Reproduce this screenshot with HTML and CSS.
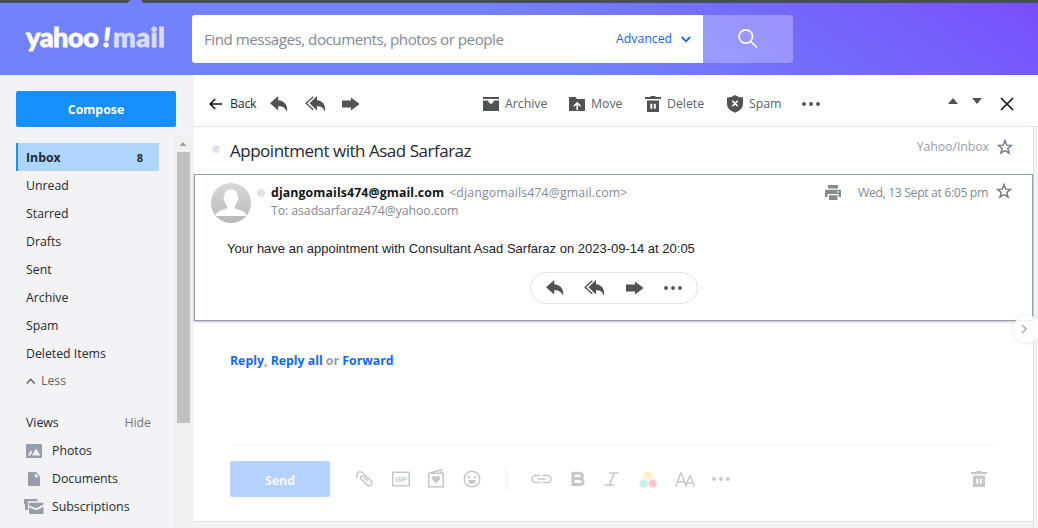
FILE: index.html
```html
<!DOCTYPE html>
<html lang="en">
<head>
<meta charset="utf-8">
<title>Yahoo Mail</title>
<link rel="stylesheet" href="styles.css">
</head>
<body>
<svg class="defs" aria-hidden="true">
  <symbol id="reply" viewBox="0 0 18 16"><path d="M0 7.2 8.2 0v4.200C14 4.600 17.600 8.600 17.200 14.600L16.400 15C15 11.500 12.500 10.200 8.200 10.200v4.200z"/></symbol>
  <symbol id="replyall" viewBox="0 0 21 16"><path d="M4.500 7.200 12 0v4.200c5.500.4 8.500 4.400 8.200 10.400l-.8.4C18.200 11.600 16.200 10.200 12 10.200v4.200z"/><path d="M8.300.7 1.200 7.200l7.100 6.500" fill="none" stroke="currentColor" stroke-width="1.400"/></symbol>
  <symbol id="forward" viewBox="0 0 18 14"><path d="M0 3.500h9V.4L17.600 7 9 13.600v-3.100H0z"/></symbol>
  <symbol id="dots" viewBox="0 0 18 4"><circle cx="2" cy="2" r="1.900"/><circle cx="9" cy="2" r="1.900"/><circle cx="16" cy="2" r="1.900"/></symbol>
  <symbol id="trash" viewBox="0 0 16 16"><path d="M0 1h5l1-1h4l1 1h5v2H0zM2 4.500h12V16H2zm3.300 3.200v5h2v-5zm3.500 0v5h2v-5z" fill-rule="evenodd"/></symbol>
  <symbol id="star" viewBox="0 0 16 16"><path d="m8 1.500 1.700 4.600 4.900.2-3.800 3.100 1.300 4.800L8 11.500l-4.100 2.700 1.300-4.800-3.800-3.100 4.900-.2z" fill="none" stroke="currentColor" stroke-width="1.400"/></symbol>
</svg>

<svg class="strip" width="1038" height="3" viewBox="0 0 1038 3"><path d="M0 0h130l-2.500 3H0zM141 0h897v3H143.500z"/></svg>
<header class="header">
  <div class="logo"><span class="logo-y">yahoo</span><span class="logo-bang">!</span><span class="logo-m">mail</span></div>
  <div class="search">
    <span class="placeholder">Find messages, documents, photos or people</span>
    <span class="advanced">Advanced</span>
    <svg class="adv-caret" width="10" height="7" viewBox="0 0 10 7"><path d="m.8 1 4.200 4.300L9.200 1"/></svg>
  </div>
  <div class="search-btn"><svg width="20" height="20" viewBox="0 0 20 20"><circle cx="7.800" cy="7.500" r="6.700"/><path d="m12.700 12.500 6.300 6"/></svg></div>
</header>

<div class="page">
  <aside class="sidebar">
    <div class="compose">Compose</div>
    <div class="side-body">
      <nav class="folders">
        <div class="folder active"><span>Inbox</span><span class="count">8</span></div>
        <div class="folder">Unread</div>
        <div class="folder">Starred</div>
        <div class="folder">Drafts</div>
        <div class="folder">Sent</div>
        <div class="folder">Archive</div>
        <div class="folder">Spam</div>
        <div class="folder">Deleted Items</div>
        <div class="less"><svg width="10" height="7" viewBox="0 0 10 7"><path d="M.8 5.500 4.700 1.300l3.900 4.200"/></svg>Less</div>
        <div class="views-head"><span>Views</span><span class="hide">Hide</span></div>
        <div class="view"><svg class="view-icon" width="20" height="16" viewBox="0 0 20 16"><path d="M3 1h14a1 1 0 0 1 1 1v12a1 1 0 0 1-1 1H3a1 1 0 0 1-1-1V2a1 1 0 0 1 1-1z"/><path class="cut" d="m4 12.500 2.700-4.700 1.600 1-2 3.700zm4 0 4-7 4.500 7z"/></svg>Photos</div>
        <div class="view"><svg class="view-icon" width="20" height="16" viewBox="0 0 20 16"><path d="M5 1h7l4 4.500V14a1 1 0 0 1-1 1H5a1 1 0 0 1-1-1V2a1 1 0 0 1 1-1z"/><path class="cut" d="M11 2.300v4h4z"/></svg>Documents</div>
        <div class="view"><svg class="view-icon" width="20" height="16" viewBox="0 0 20 16"><path d="M.5 0h12.500l.8 2.300H4V11H1V5H0V.5zM5 3.700h14.500v1.800l-7.200 3.800L5 6.500zm0 4.500 7.500 3 7-3.500v6.300a1 1 0 0 1-1 1H6a1 1 0 0 1-1-1z"/></svg>Subscriptions</div>
        <div class="view"><svg class="view-icon" width="20" height="16" viewBox="0 0 20 16"><circle cx="10" cy="8" r="7"/></svg></div>
      </nav>
      <div class="scrollbar"><svg width="16" height="17" viewBox="0 0 16 17"><path d="M4.500 11 8 7l3.500 4z"/></svg><div class="thumb"></div></div>
    </div>
  </aside>

  <div class="right">
    <div class="toolbar">
      <div class="tools left">
        <svg class="back-arrow" width="14" height="12" viewBox="0 0 14 12"><path d="M13 6H1.200M6.200 1l-5 5 5 5"/></svg>
        <span class="t-back">Back</span>
        <svg class="i-reply" width="18" height="16"><use href="#reply"/></svg>
        <svg class="i-replyall" width="21" height="16"><use href="#replyall"/></svg>
        <svg class="i-forward" width="18" height="14"><use href="#forward"/></svg>
      </div>
      <div class="tools mid">
        <svg width="16" height="14" viewBox="0 0 16 14"><path d="M0 0h16v2H0zM0 3.500h5.500v1.800L8 7l2.500-1.700V3.500H16V14H0z"/></svg><span class="t-archive">Archive</span>
        <svg width="16" height="14" viewBox="0 0 16 14"><path d="M0 0h6.500l1.500 2h8v12H0z"/><path class="up" d="M8.200 13V6.200M4.800 9.200l3.400-3.400 3.400 3.400"/></svg><span class="t-move">Move</span>
        <svg width="16" height="16"><use href="#trash"/></svg><span class="t-delete">Delete</span>
        <svg width="16" height="18" viewBox="0 0 16 18"><path d="M8 0q3.500 2.500 8 2.500V9q0 5.500-8 8.700Q0 14.500 0 9V2.500Q4.500 2.500 8 0z"/><path class="up" d="m5.300 5.800 5.400 5.400m0-5.400-5.400 5.400"/></svg><span class="t-spam">Spam</span>
        <svg width="18" height="4"><use href="#dots"/></svg>
      </div>
      <div class="tools end">
        <svg class="tri" width="10" height="6" viewBox="0 0 10 6"><path d="m0 6 5-6 5 6z"/></svg>
        <svg class="tri" width="10" height="6" viewBox="0 0 10 6"><path d="m0 0 5 6 5-6z"/></svg>
        <svg class="close" width="14" height="14" viewBox="0 0 14 14"><path d="m1 1 12 12m0-12L1 13"/></svg>
      </div>
    </div>
    <div class="below">
      <main class="content">
        <div class="subject">
          <i class="dot"></i>
          <h1>Appointment with Asad Sarfaraz</h1>
          <span class="where">Yahoo/Inbox</span>
          <svg class="star" width="16" height="16"><use href="#star"/></svg>
        </div>
        <section class="message">
          <div class="msg-head">
            <svg class="avatar" width="40" height="40" viewBox="0 0 40 40"><defs><linearGradient id="av" x2="0" y2="1"><stop stop-color="#d8d8d8"/><stop offset="1" stop-color="#b9b9b9"/></linearGradient></defs><circle cx="20" cy="20" r="20" fill="url(#av)"/><path fill="#fff" d="M20 6.500c4.500 0 6.800 2.500 6.600 7 1.300 0 1 3.700-.3 4.500-.4 2.300-1.200 4-2.500 5 0 3 2 3.300 5.200 4 4 1 5.800 3 6.500 6h-31c.7-3 2.500-5 6.500-6 3.200-.7 5.200-1 5.200-4-1.300-1-2.100-2.700-2.500-5-1.300-.8-1.600-4.500-.3-4.500-.2-4.500 2.100-7 6.600-7z"/></svg>
            <i class="dot small"></i>
            <div class="who">
              <div class="from-row"><b>djangomails474@gmail.com</b><span class="addr">&lt;djangomails474@gmail.com&gt;</span></div>
              <div class="to">To: asadsarfaraz474@yahoo.com</div>
            </div>
            <svg class="print" width="16" height="15" viewBox="0 0 16 15"><path d="M3 0h10v3.500H3zM1 4.700h14a1 1 0 0 1 1 1V12h-2.500V9h-11v3H0V5.700a1 1 0 0 1 1-1z"/><path d="M4 10.200h8.500V15H4z"/><path d="M12 6.200h1.700v1.200H12z" fill="#fff"/></svg>
            <span class="date">Wed, 13 Sept at 6:05 pm</span>
            <svg class="star" width="16" height="16"><use href="#star"/></svg>
          </div>
          <p class="text">Your have an appointment with Consultant Asad Sarfaraz on 2023-09-14 at 20:05</p>
          <div class="pill">
            <svg width="18" height="16"><use href="#reply"/></svg>
            <svg width="21" height="16"><use href="#replyall"/></svg>
            <svg width="18" height="14"><use href="#forward"/></svg>
            <svg width="18" height="4"><use href="#dots"/></svg>
          </div>
        </section>
        <section class="composer">
          <div class="reply-links"><a>Reply</a>, <a>Reply all</a> or <a>Forward</a></div>
          <div class="edit-bar">
            <div class="send">Send</div>
            <div class="edit-icons">
              <svg width="17" height="18" viewBox="0 0 17 18"><path class="ln" d="M1.200 8C-.5 4.800 3-.2 6.200 2.500L14.700 10.500c3 3-.5 7-3.700 4.400L5.200 9.300C3.300 7.300 5.800 5 7.700 6.700l4.300 4.200"/></svg>
              <svg class="gif" width="18" height="16" viewBox="0 0 18 16"><path class="ln" d="M.8 1.300h16.400v13.400H.8z"/><text x="9" y="10.900" text-anchor="middle">GIF</text></svg>
              <svg class="card" width="16" height="19" viewBox="0 0 16 19"><path class="ln" d="M.8 4.200h14.400v13.500H.8zM2.500 3.800 13.300 1v2.800"/><path d="m8 14.500-4-4.200V8l1.300-1.300h1.600L8 8l1.100-1.300h1.600L12 8v2.300z"/></svg>
              <svg width="18" height="18" viewBox="0 0 18 18"><circle class="ln" cx="9" cy="9" r="7.800"/><path d="M5 6h2v2H5zm5.800 0h2v2h-2zM5 10h8q-.8 4-4 4t-4-4z"/></svg>
              <i class="sep"></i>
              <svg width="21" height="10" viewBox="0 0 21 10"><path class="ln" d="M9.500 1.500H4.500a3.500 3.500 0 0 0 0 7H9.500M11.500 1.500h5a3.500 3.500 0 0 1 0 7h-5M6.500 5h8"/></svg>
              <svg width="14" height="16" viewBox="0 0 14 16"><path class="bold" d="M2 2.300h6c4.400 0 4.400 5.200 0 5.200H2 8.500c4.800 0 4.800 6 0 6H2z"/></svg>
              <svg class="italic" width="15" height="14" viewBox="0 0 15 14"><path class="ln" d="M5 1h9.500M.5 13H10M10.300 1 5.300 13"/></svg>
              <svg width="18" height="17" viewBox="0 0 18 17"><circle cx="9" cy="4.500" r="4.200" fill="#ffefc3"/><circle cx="4.700" cy="12.400" r="4.200" fill="#c6f1e8"/><circle cx="13.700" cy="12.400" r="4.200" fill="#ffc6cd"/></svg>
              <svg width="20" height="15" viewBox="0 0 20 15"><path class="ln" d="m.8 14.500 5-13.500h.4l5 13.500M2.600 10h6.800M10.600 14.500 14.800 4h.4l4.200 10.500M12 11h6"/></svg>
              <svg class="more" width="18" height="4"><use href="#dots"/></svg>
            </div>
            <svg class="bin" width="16" height="16"><use href="#trash"/></svg>
          </div>
        </section>
      </main>
      <div class="gutter"></div>
    </div>
  </div>
</div>
<div class="tab"><svg width="7" height="10" viewBox="0 0 7 10"><path d="m1 1 4 4-4 4"/></svg></div>
</body>
</html>
```

FILE: styles.css
```css
* { box-sizing: border-box; }
body { margin: 0; width: 1038px; height: 528px; overflow: hidden; position: relative; display: flex; flex-direction: column; background: #f3f3f6; color: #232a31; font: 12.300px/20px "Open Sans", "Noto Sans", sans-serif; }
svg { display: block; flex: none; fill: currentColor; }
.defs { position: absolute; width: 0; height: 0; }

.strip { color: #464e56; background: #7280fb; }
.header { height: 72px; flex: none; display: flex; padding: 12px 0 12px 26px; color: #fff; background: linear-gradient(35deg, #7282fc 0, #7282fc 51%, #7750fa 100%); }
.logo { width: 166px; display: flex; font: 900 27px/44px Lato, sans-serif; white-space: nowrap; -webkit-text-stroke: .8px; }
.logo-y { width: 77px; letter-spacing: -.4px; }
.logo-bang { width: 10px; font-style: italic; }
.logo-m { color: #d8dcfe; letter-spacing: .5px; }
.search { width: 511px; height: 48px; display: flex; align-items: center; padding-left: 12px; background: #fff; border-radius: 3px 0 0 3px; }
.placeholder { width: 412px; color: #828a93; font-size: 15.200px; letter-spacing: -.500px; }
.advanced { width: 65px; color: #0f69ff; }
.adv-caret { fill: none; stroke: #0f69ff; stroke-width: 1.800; }
.search-btn { width: 90px; height: 48px; display: flex; align-items: center; justify-content: center; border-radius: 0 3px 3px 0; background: rgba(255, 255, 255, .28); }
.search-btn svg { fill: none; stroke: #fff; stroke-width: 1.700; }

.page { flex: 1; min-height: 0; display: flex; }
.sidebar { width: 194px; padding-top: 16px; display: flex; flex-direction: column; }
.compose { margin: 0 18px 8px 16px; height: 36px; flex: none; border-radius: 2px; background: #188fff; color: #fff; font-weight: 700; line-height: 37px; text-align: center; }
.side-body { display: flex; flex: 1; min-height: 0; }
.folders { width: 175px; padding: 8px 16px 0; }
.folder { height: 28px; line-height: 30px; padding-left: 10px; }
.active { display: flex; justify-content: space-between; padding: 0 16px 0 8px; border-left: 2px solid #188fff; background: #aed5fc; font-weight: 700; }
.count { font-size: 11px; line-height: 30px; }
.less { display: flex; align-items: center; gap: 5px; height: 28px; padding-left: 10px; color: #5b636a; }
.less svg { fill: none; stroke: #5b636a; stroke-width: 1.500; }
.views-head { display: flex; justify-content: space-between; height: 28px; margin-top: 14px; padding: 0 8px 0 10px; line-height: 28px; }
.hide { color: #6e7780; }
.view { display: flex; align-items: center; gap: 8px; height: 28px; padding-left: 8px; }
.view-icon { color: #979ea8; }
.cut { fill: #f3f3f6; }
.scrollbar { width: 17px; background: #f0f0f0; }
.scrollbar svg { color: #9d9d9d; }
.thumb { width: 13px; height: 271px; margin-left: 2px; background: #c1c1c1; }

.right { flex: 1; display: flex; flex-direction: column; }
.toolbar { height: 52px; flex: none; background: #fff; border-bottom: 1px solid #e0e4e9; display: flex; align-items: center; padding: 6px 25px 0 15px; }
.tools { display: flex; align-items: center; color: #505254; }
.left { width: 274px; }
.back-arrow { fill: none; stroke: #111; stroke-width: 1.600; margin-right: 7px; }
.t-back { width: 40px; color: #232a31; letter-spacing: -.2px; }
.i-reply { margin-right: 17px; }
.i-replyall { margin-right: 16px; }
.mid { flex: 1; }
.mid span { color: #5b636a; padding-left: 6px; }
.t-archive { width: 70px; }
.t-move { width: 60px; }
.t-delete { width: 66px; }
.t-spam { width: 59px; }
.up { fill: none; stroke: #fff; stroke-width: 1.600; }
.tri { margin: 0 14px 5px 0; }
.close { fill: none; stroke: #111; stroke-width: 1.600; margin: 0 -1px 0 4px; }
.below { flex: 1; display: flex; }
.content { width: 839px; }
.gutter { flex: 1; border-left: 1px solid #e0e4e9; background: #f3f4f7; }

.subject { height: 47px; display: flex; align-items: center; padding: 0 20px 0 18px; background: #fff; }
.dot { width: 8px; height: 8px; border-radius: 50%; background: #e0e4e9; margin: 0 10px 4px 0; }
.subject h1 { flex: 1; margin: 0; font-size: 17px; line-height: 24px; font-weight: 400; letter-spacing: -.480px; }
.where { color: #979ea8; margin: 0 8px 8px 0; letter-spacing: -.050px; }
.star { color: #6e7780; margin-bottom: 8px; }
.message { height: 147px; border: 1px solid #979ea8; background: #fff; box-shadow: 0 1px 2px rgba(0, 0, 0, .25); position: relative; }
.msg-head { display: flex; padding: 8px 20px 0 16px; height: 58px; }
.avatar { margin-right: 6px; }
.small { margin: 6px 6px 0 0; }
.who { flex: 1; line-height: 18px; padding-top: 1px; }
.from-row b { color: #101518; margin-right: 5px; letter-spacing: .120px; }
.addr { letter-spacing: .140px; }
.to { letter-spacing: -.070px; }
.addr, .to, .date { color: #828a93; }
.print { margin: 2px 17px 0 0; color: #878a8e; }
.date { margin-right: 8px; line-height: 18px; padding-top: 1px; letter-spacing: -.390px; }
.msg-head .star { margin: 0; }
.text { margin: 0 0 0 32px; font: 13px/31px "Liberation Sans", Arial, sans-serif; color: #1d2228; }
.pill { width: 168px; height: 32px; margin: 8px 0 0 335px; padding: 0 15px; border: 1px solid #e0e4e9; border-radius: 16px; display: flex; align-items: center; justify-content: space-between; color: #505254; }

.composer { height: 201px; background: #fff; border-bottom: 1px solid #e0e4e9; padding: 30px 36px 0; }
.reply-links { height: 94px; font-weight: 700; color: #979ea8; border-bottom: 1px solid #f4f5f6; }
.reply-links a { color: #0f69ff; }
.edit-bar { display: flex; align-items: center; height: 36px; margin-top: 16px; color: #c7c7c8; }
.send { width: 100px; height: 36px; border-radius: 2px; background: #b5d1ff; color: #f6faff; font-weight: 700; line-height: 39px; text-align: center; }
.edit-icons { flex: 1; display: flex; align-items: center; gap: 18.600px; padding-left: 26px; }
.card { margin-bottom: 2px; }
.italic { margin: 0 1px; }
.ln { fill: none; stroke: currentColor; stroke-width: 1.500; }
.bold { fill: none; stroke: currentColor; stroke-width: 3; }
.gif { font: 700 7px "Liberation Sans", sans-serif; }
.sep { width: 1px; height: 24px; background: #f1f2f3; margin: 0 5px 0 7px; }
.more { margin-left: -2px; }
.bin { margin-right: 10px; }
.tab { position: absolute; left: 1013px; top: 315px; width: 28px; height: 28px; border-radius: 14px; padding: 9px 0 0 8px; background: rgba(255, 255, 255, .85); box-shadow: 0 0 3px rgba(0, 0, 0, .15); }
.tab svg { fill: none; stroke: #aaa; stroke-width: 1.500; }
```
